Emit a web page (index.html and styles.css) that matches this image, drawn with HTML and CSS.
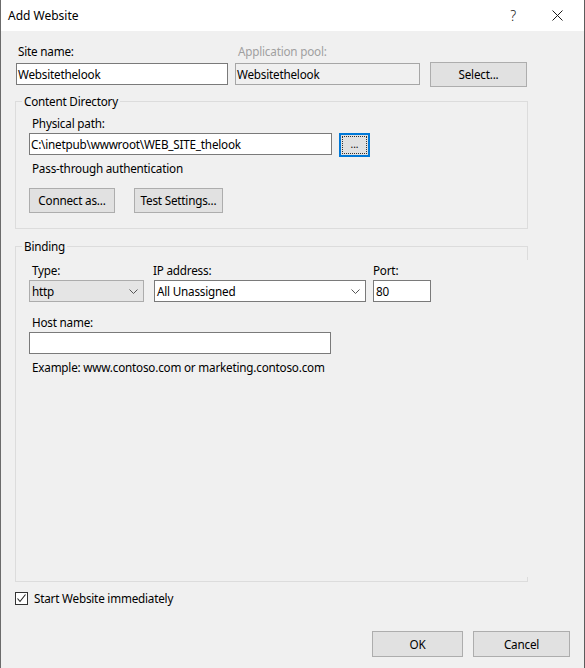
FILE: index.html
```html
<!DOCTYPE html>
<html>
<head>
<meta charset="utf-8">
<link rel="stylesheet" href="styles.css">
</head>
<body>
<div class="window">
  <div class="titlebar">
    <span class="title">Add Website</span>
    <span class="help">?</span>
    <span class="close">
      <svg width="11" height="11" viewBox="0 0 11 11"><path d="M0.5 0.5 L10.5 10.5 M10.5 0.5 L0.5 10.5" stroke="#1a1a1a" stroke-width="1" fill="none"/></svg>
    </span>
  </div>
  <div class="content">
    <div class="top-row">
      <div class="label site-label">Site name:</div>
      <div class="label pool-label disabled">Application pool:</div>
      <div></div>
      <div class="textbox site-box">Websitethelook</div>
      <div class="textbox pool-box readonly">Websitethelook</div>
      <div class="button select-btn">Select...</div>
    </div>

    <fieldset class="group content-group">
      <legend>Content Directory</legend>
      <div class="group-body">
        <div class="label">Physical path:</div>
        <div class="path-row">
          <div class="textbox path-box">C:\inetpub\wwwroot\WEB_SITE_thelook</div>
          <div class="button browse-btn"><span class="focus-rect">...</span></div>
        </div>
        <div class="label auth-label">Pass-through authentication</div>
        <div class="btn-row">
          <div class="button connect-btn">Connect as...</div>
          <div class="button test-btn">Test Settings...</div>
        </div>
      </div>
    </fieldset>

    <fieldset class="group binding-group">
      <legend>Binding</legend>
      <div class="group-body">
        <div class="binding-row">
          <div class="field type-field">
            <div class="label type-label">Type:</div>
            <div class="combo combo-gray">
              <span>http</span>
              <svg class="chev" width="9" height="5" viewBox="0 0 9 5"><path d="M0.5 0.5 L4.5 4.5 L8.5 0.5" stroke="#555" stroke-width="1" fill="none"/></svg>
            </div>
          </div>
          <div class="field ip-field">
            <div class="label ip-label">IP address:</div>
            <div class="combo combo-white">
              <span>All Unassigned</span>
              <svg class="chev" width="9" height="5" viewBox="0 0 9 5"><path d="M0.5 0.5 L4.5 4.5 L8.5 0.5" stroke="#555" stroke-width="1" fill="none"/></svg>
            </div>
          </div>
          <div class="field port-field">
            <div class="label port-label">Port:</div>
            <div class="textbox port-box">80</div>
          </div>
        </div>
        <div class="label host-label">Host name:</div>
        <div class="textbox host-box"></div>
        <div class="label example">Example: www.contoso.com or marketing.contoso.com</div>
      </div>
    </fieldset>

    <div class="check-row">
      <span class="checkbox">
        <svg width="11" height="11" viewBox="0 0 11 11"><path d="M1.5 5.5 L4 8.5 L9.5 1.5" stroke="#222" stroke-width="1.1" fill="none"/></svg>
      </span>
      <span class="check-label">Start Website immediately</span>
    </div>

    <div class="footer">
      <div class="button ok-btn">OK</div>
      <div class="button cancel-btn">Cancel</div>
    </div>
  </div>
</div>
</body>
</html>
```

FILE: styles.css
```css
html, body {
  margin: 0;
  padding: 0;
}
body {
  width: 585px;
  height: 668px;
  overflow: hidden;
  font-family: "Noto Sans", "Liberation Sans", sans-serif;
  font-size: 11.7px;
  letter-spacing: -0.2px;
  color: #000;
}
.window {
  box-sizing: border-box;
  width: 585px;
  height: 668px;
  background: #f0f0f0;
  border-left: 1px solid #6b6b6b;
  border-right: 1px solid #5c5c5c;
  display: flex;
  flex-direction: column;
}
.titlebar {
  height: 31px;
  flex: none;
  background: #fff;
  display: flex;
  align-items: center;
  padding-left: 7px;
}
.title {
  font-size: 12px;
  letter-spacing: 0;
  color: #000;
}
.help {
  margin-left: auto;
  margin-right: 36px;
  font-size: 14px;
  font-weight: 300;
  color: #1a1a1a;
}
.close {
  display: flex;
  margin-right: 21px;
}
.content {
  flex: 1;
  display: flex;
  flex-direction: column;
  padding: 12px 0 0 15px;
}
.label {
  line-height: 16px;
  height: 16px;
  white-space: nowrap;
}
.disabled {
  color: #a0a0a0;
}
.top-row {
  display: grid;
  grid-template-columns: 212px 192px 107px;
  row-gap: 4px;
}
.site-label { padding-left: 2px; }
.pool-label { padding-left: 10px; }
.textbox {
  box-sizing: border-box;
  height: 22px;
  line-height: 20px;
  border: 1px solid #7a7a7a;
  background: #fff;
  padding-left: 1px;
  white-space: nowrap;
  overflow: hidden;
}
.site-box { width: 212px; }
.pool-box {
  width: 185px;
  margin-left: 7px;
}
.readonly {
  background: #f0f0f0;
  border-color: #a6a6a6;
}
.button {
  box-sizing: border-box;
  height: 25px;
  line-height: 23px;
  background: #e1e1e1;
  border: 1px solid #adadad;
  text-align: center;
  white-space: nowrap;
}
.select-btn {
  width: 97px;
  margin-left: 10px;
  margin-top: -1px;
}

.group {
  margin: 0 0 0 -1px;
  padding: 0;
  width: 513px;
  box-sizing: border-box;
  border: 1px solid #dcdcdc;
  min-width: 0;
}
.group legend {
  margin-left: 6px;
  padding: 0 2px;
  line-height: 16px;
  height: 16px;
}
.group-body {
  padding: 6px 0 0 13px;
}
.group-body > .label {
  padding-left: 3px;
}
.content-group {
  margin-top: 6px;
}
.content-group .group-body {
  padding-bottom: 15px;
}
.content-group .label {
  margin-bottom: 2px;
}
.path-row {
  display: flex;
}
.path-box {
  width: 303px;
}
.browse-btn {
  width: 31px;
  height: 24px;
  margin-left: 7px;
  border: 2px solid #0078d7;
  padding: 1px;
  line-height: normal;
  display: flex;
}
.focus-rect {
  flex: 1;
  border: 1px dotted #333;
  font-size: 10px;
  line-height: 15px;
  letter-spacing: 0;
  text-align: center;
}
.auth-label {
  margin-top: 3px;
}
.btn-row {
  display: flex;
  margin-top: 12px;
}
.connect-btn { width: 86px; }
.test-btn { width: 89px; margin-left: 19px; }

.binding-group {
  margin-top: 9px;
  flex: 1;
  position: relative;
  border-right-color: transparent;
  display: flex;
  flex-direction: column;
}
.binding-group::before,
.binding-group::after {
  content: "";
  position: absolute;
  right: -1px;
  width: 1px;
  background: #dcdcdc;
}
.binding-group::before {
  top: -8px;
  height: 14px;
}
.binding-group::after {
  bottom: -1px;
  height: 5px;
}
.binding-group .group-body {
  padding-top: 8px;
}
.binding-row {
  display: flex;
}
.field .label {
  margin-bottom: 2px;
}
.type-label { padding-left: 3px; }
.ip-field { margin-left: 10px; }
.ip-label { margin-left: -1px; }
.port-field { margin-left: 7px; }
.combo {
  box-sizing: border-box;
  height: 22px;
  display: flex;
  align-items: center;
  padding: 0 5px 0 2px;
  justify-content: space-between;
}
.combo-gray {
  width: 115px;
  background: #e5e5e5;
  border: 1px solid #acacac;
}
.combo-white {
  width: 212px;
  background: #fff;
  border: 1px solid #7a7a7a;
}
.port-box { width: 58px; padding-left: 2px; }
.host-label {
  margin-top: 12px;
  margin-bottom: 2px;
}
.host-box {
  width: 302px;
}
.example {
  margin-top: 5px;
}

.check-row {
  display: flex;
  align-items: center;
  margin-top: 8px;
  margin-left: -1px;
  height: 16px;
}
.checkbox {
  box-sizing: border-box;
  width: 13px;
  height: 13px;
  border: 1px solid #333;
  background: #fff;
  display: flex;
  align-items: center;
  justify-content: center;
}
.check-label {
  margin-left: 6px;
  line-height: 16px;
}
.footer {
  display: flex;
  justify-content: flex-end;
  margin-top: 25px;
  padding-right: 14px;
  padding-bottom: 11px;
}
.ok-btn { width: 91px; height: 26px; line-height: 24px; }
.cancel-btn { width: 97px; height: 26px; line-height: 24px; margin-left: 10px; }
```
